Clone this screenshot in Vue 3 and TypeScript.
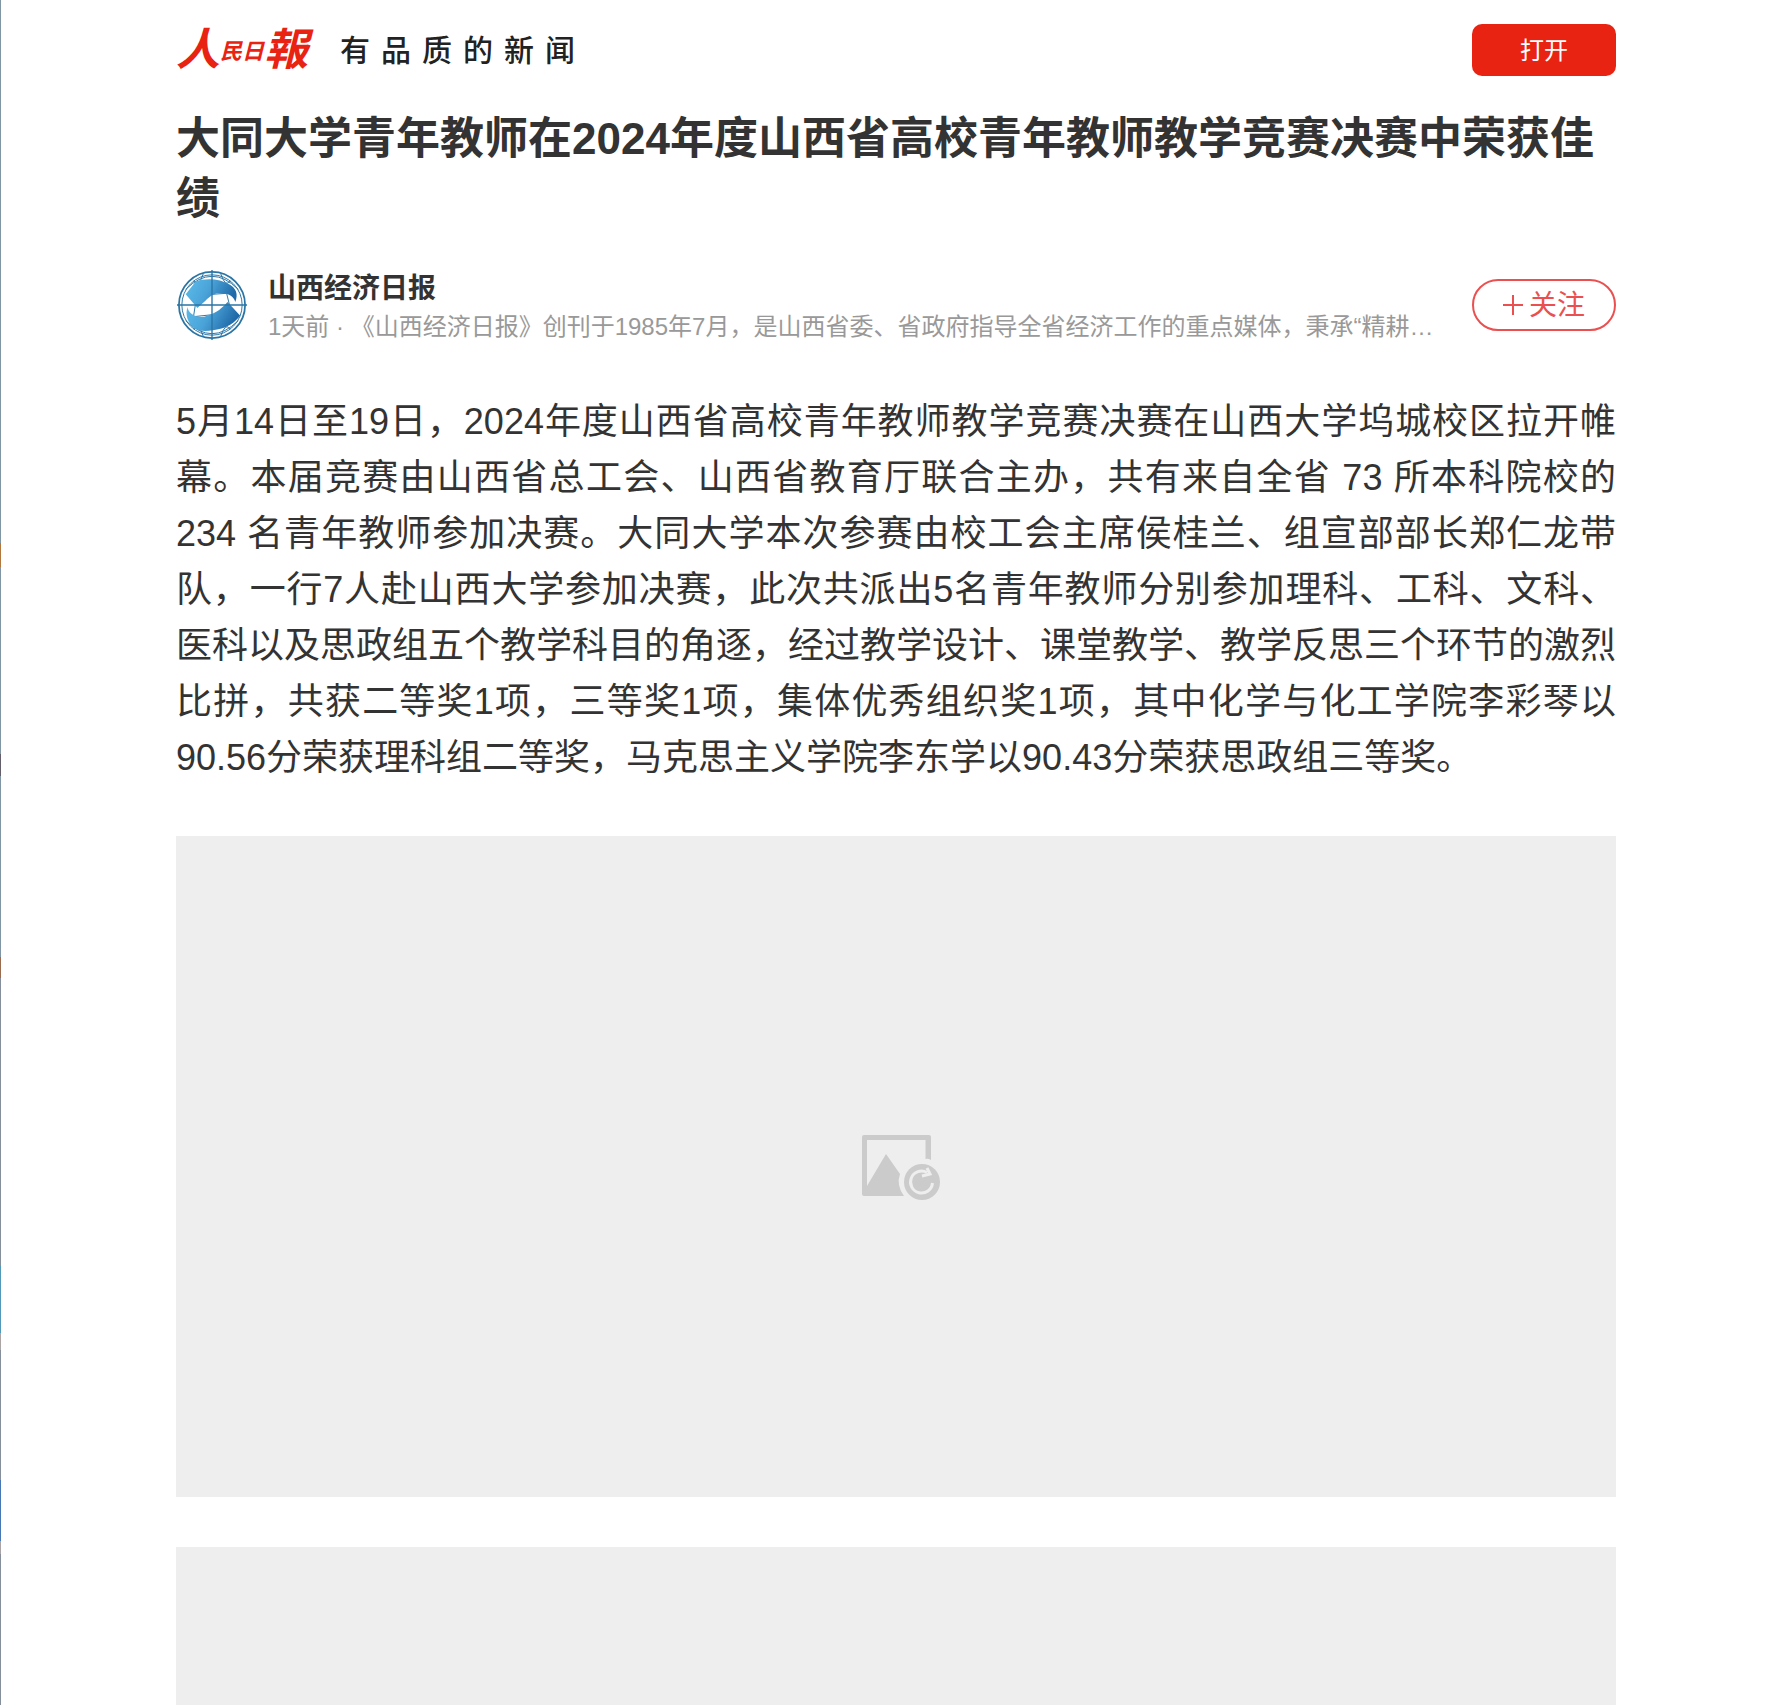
<script setup lang="ts">
interface Mark {
  char: string
  size: 'large' | 'small'
}

const wordmark: Mark[] = [
  { char: '人', size: 'large' },
  { char: '民', size: 'small' },
  { char: '日', size: 'small' },
  { char: '報', size: 'large' },
]
const slogan: string[] = [...'有品质的新闻']
const photos: number[] = [1, 2]
</script>

<template>
  <div class="page">
    <header class="topbar">
      <a class="brand" href="#">
        <span class="wordmark"><span v-for="m in wordmark" :key="m.char" :class="m.size">{{ m.char }}</span></span>
        <span class="slogan"><span v-for="c in slogan" :key="c">{{ c }}</span></span>
      </a>
      <button class="open" type="button">打开</button>
    </header>

    <main>
      <h1>大同大学青年教师在2024年度山西省高校青年教师教学竞赛决赛中荣获佳绩</h1>

      <section class="author">
        <svg class="avatar" viewBox="-1 -1 74 74" aria-hidden="true">
          <defs>
            <linearGradient id="band" x1="0" y1="0" x2="1" y2="0.3">
              <stop offset="0" stop-color="#5cbdea" />
              <stop offset="0.5" stop-color="#4aa3d8" />
              <stop offset="1" stop-color="#1f69a8" />
            </linearGradient>
          </defs>
          <g fill="none" stroke="#2a75a5">
            <circle cx="36" cy="36" r="34" stroke-width="1.8" />
            <circle cx="36" cy="36" r="31" stroke-width="1" />
            <path d="M9 20Q36 -7 63 20M9 52Q36 79 63 52M17 11Q22 19 27 4M45 4Q50 19 55 11M17 61Q22 53 27 68M45 68Q50 53 55 61M19 35L17 48L36 46M36 25L51 24L54 36" stroke-width="1" />
          </g>
          <path d="M9 25L19 12C30 8 44 9 54 15C61 19 63 25 60 33C58 26 52 23 41 24C33 26 29 33 21 39Z" fill="url(#band)" />
          <path d="M11 38C11 45 22 51 31 47C42 44 46 39 52 33L65 47C56 58 48 60 37 62C29 63 23 63 18 60C11 55 8 45 11 38Z" fill="url(#band)" />
          <path d="M36 0V72M0 36H72" fill="none" stroke="#2a75a5" stroke-width="1.4" />
        </svg>
        <div class="about">
          <h2>山西经济日报</h2>
          <p>1天前 · 《山西经济日报》创刊于1985年7月，是山西省委、省政府指导全省经济工作的重点媒体，秉承“精耕细作</p>
        </div>
        <button class="follow" type="button">
          <svg viewBox="0 0 20 20" aria-hidden="true"><path d="M0 10H20M10 0V20" /></svg>
          <span>关注</span>
        </button>
      </section>

      <p class="body">5月14日至19日，2024年度山西省高校青年教师教学竞赛决赛在山西大学坞城校区拉开帷幕。本届竞赛由山西省总工会、山西省教育厅联合主办，共有来自全省 73 所本科院校的 234 名青年教师参加决赛。大同大学本次参赛由校工会主席侯桂兰、组宣部部长郑仁龙带队，一行7人赴山西大学参加决赛，此次共派出5名青年教师分别参加理科、工科、文科、医科以及思政组五个教学科目的角逐，经过教学设计、课堂教学、教学反思三个环节的激烈比拼，共获二等奖1项，三等奖1项，集体优秀组织奖1项，其中化学与化工学院李彩琴以90.56分荣获理科组二等奖，马克思主义学院李东学以90.43分荣获思政组三等奖。</p>

      <figure v-for="n in photos" :key="n" class="photo">
        <svg viewBox="0 0 88 66" aria-hidden="true">
          <path d="M12 1H77Q79 1 79 3V26Q76 24 73.500 25V6H15V52L34 20L48 40Q44 51 52 62H12Q10 62 10 60V3Q10 1 12 1Z" fill="#cbcbcb" />
          <circle cx="70" cy="48" r="18" fill="#cbcbcb" />
          <path d="M80.500 49A11 11 0 1 1 75 38.500" fill="none" stroke="#eee" stroke-width="3" />
          <path d="M75 34L78 40L70 42" fill="none" stroke="#eee" stroke-width="3" />
        </svg>
      </figure>
    </main>
  </div>
</template>

<style>
body {
  margin: 0;
  background: #fff;
}
</style>

<style scoped>
.page {
  box-sizing: border-box;
  height: 100vh;
  overflow: hidden;
  padding: 24px 173px 0 176px;
  background:
    linear-gradient(
      #8096a4 0 543px, #b07840 543px 567px, #8096a4 567px 754px, #625f6b 754px 776px,
      #8096a4 776px 957px, #996c50 957px 978px, #858f9c 978px 1266px, #5298b8 1266px 1333px,
      #aaa4a4 1333px 1350px, #858f9c 1350px 1480px, #4878b4 1480px 1541px, #aaa4a4 1541px 1554px, #858f9c 1554px
    ) 0 0 / 1px 100% no-repeat;
  font-family: "Liberation Sans", "Noto Sans CJK SC", sans-serif;
  color: #333;
}
h1, h2, p, figure {
  margin: 0;
}
button {
  box-sizing: border-box;
  flex: none;
  width: 144px;
  height: 52px;
  padding: 0;
  font-family: inherit;
}
.topbar {
  display: flex;
  align-items: center;
  justify-content: space-between;
  height: 52px;
}
.brand {
  display: flex;
  align-items: center;
  gap: 32px;
  text-decoration: none;
}
.wordmark {
  display: flex;
  align-items: center;
  color: #e92312;
  font-style: italic;
  font-weight: 700;
  line-height: 52px;
}
.large {
  font-size: 44px;
}
.small {
  padding-top: 4px;
  font-size: 22px;
}
.slogan {
  display: flex;
  gap: 11px;
  padding-top: 2px;
  font-size: 30px;
  font-weight: 500;
  line-height: 52px;
  color: #222;
}
.open {
  padding-bottom: 4px;
  border: 0;
  border-radius: 10px;
  background: #e92312;
  color: #fff;
  font-size: 24px;
}
h1 {
  margin-top: 33px;
  font-size: 44px;
  line-height: 60px;
}
.author {
  display: flex;
  align-items: flex-start;
  margin-top: 40px;
}
.avatar {
  flex: none;
  width: 72px;
  height: 72px;
}
.about {
  flex: 1;
  min-width: 0;
  margin: 0 36px 0 20px;
}
h2 {
  font-size: 28px;
  line-height: 40px;
}
.about p {
  overflow: hidden;
  color: #999;
  font-size: 24px;
  line-height: 36px;
  text-overflow: ellipsis;
  white-space: nowrap;
}
.follow {
  display: flex;
  align-items: center;
  justify-content: center;
  gap: 6px;
  margin-top: 10px;
  border: 2px solid #eb5050;
  border-radius: 26px;
  background: #fff;
  color: #eb5050;
  font-size: 28px;
}
.follow span {
  padding-bottom: 4px;
}
.follow svg {
  width: 20px;
  height: 20px;
  fill: none;
  stroke: #eb5050;
  stroke-width: 2;
}
.body {
  margin-top: 49px;
  font-size: 36px;
  line-height: 56px;
  text-align: justify;
}
.photo {
  display: flex;
  align-items: center;
  justify-content: center;
  height: 661px;
  margin-top: 50px;
  background: #eee;
}
.photo svg {
  width: 88px;
  height: 66px;
}
</style>
